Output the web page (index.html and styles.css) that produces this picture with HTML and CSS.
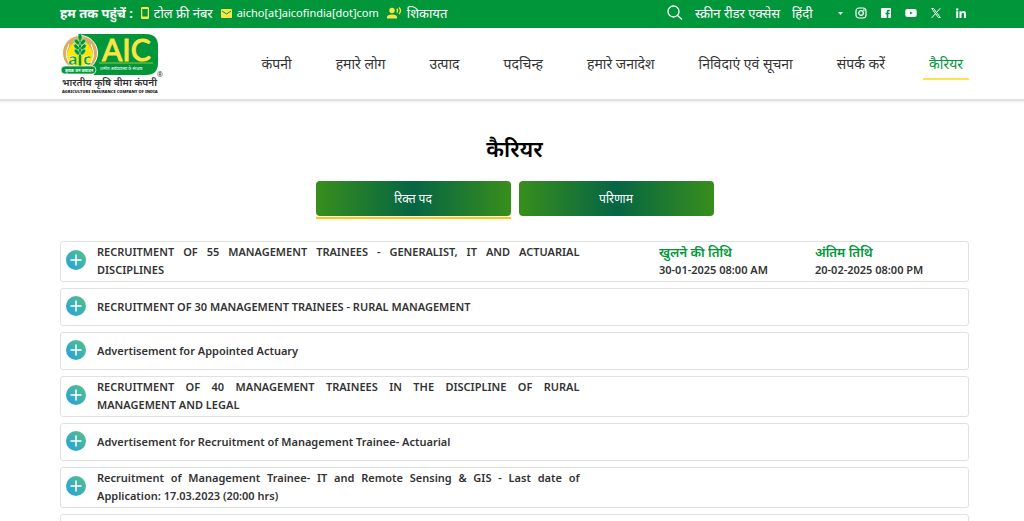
FILE: index.html
```html
<!DOCTYPE html>
<html lang="hi">
<head>
    <meta charset="UTF-8">
    <meta name="viewport" content="width=device-width, initial-scale=1.0">
    <title>कैरियर - AIC</title>
    <link rel="stylesheet" href="styles.css">
</head>
<body>
    <div class="topbar">
        <div class="contact">
            <strong>हम तक पहुंचें :</strong>
            <a href="#tollfree">
                <svg width="8" height="12" viewBox="0 0 8 12" aria-hidden="true"><path fill="#f9e547" fill-rule="evenodd" d="M1.500 0h5A1.300 1.300 0 0 1 8 1.300v9.400A1.300 1.300 0 0 1 6.500 12h-5A1.300 1.300 0 0 1 0 10.700V1.300A1.300 1.300 0 0 1 1.500 0zM1.300 2v7.500h5.400V2z"/></svg>
                <span>टोल फ्री नंबर</span>
            </a>
            <a href="#email">
                <svg width="11" height="9" viewBox="0 0 11 9" aria-hidden="true"><rect width="11" height="9" rx="1" fill="#f9e547"/><path d="M1 2l4.500 3L10 2" fill="none" stroke="#009639"/></svg>
                <span class="email">aicho[at]aicofindia[dot]com</span>
            </a>
            <a href="#complaint">
                <svg width="15" height="12" viewBox="0 0 15 12" aria-hidden="true"><circle cx="5" cy="3.500" r="2.700" fill="#f9e547"/><path fill="#f9e547" d="M0 11.500V10q0-2.500 5-2.500T10 10v1.500z"/><path d="M9.800 1.800q1.600 1.800 0 3.800M12 .5q3 3.200 0 6.500" fill="none" stroke="#f9e547" stroke-width="1.300"/></svg>
                <span>शिकायत</span>
            </a>
        </div>
        <div class="tools">
            <button class="search" aria-label="खोजें">
                <svg width="16" height="16" viewBox="0 0 16 16" fill="none" stroke="#fff" stroke-width="1.300"><circle cx="6.500" cy="6.500" r="5.500"/><path d="M10.500 10.500l4.500 4"/></svg>
            </button>
            <a href="#screen-reader">स्क्रीन रीडर एक्सेस</a>
            <div class="language">
                <select aria-label="भाषा">
                    <option>हिंदी</option>
                    <option>English</option>
                </select>
                <svg width="5" height="3" viewBox="0 0 5 3" aria-hidden="true"><path d="M0 0h5L2.500 3z" fill="#fff"/></svg>
            </div>
            <div class="social">
                <a href="#instagram" aria-label="Instagram"><svg width="12" height="12" viewBox="0 0 12 12" fill="none" stroke="#fff" stroke-width="1.200"><rect x="1" y="1" width="10" height="10" rx="3"/><circle cx="6" cy="6" r="2.300"/><circle cx="8.900" cy="3.100" r=".3"/></svg></a>
                <a href="#facebook" aria-label="Facebook"><svg width="12" height="12" viewBox="0 0 12 12"><path fill="#fff" d="M2 1h8a1 1 0 0 1 1 1v8a1 1 0 0 1-1 1H8.300V7.300h1.200l.2-1.500H8.300v-.9c0-.5.2-.7.800-.7h.7V2.800H8.700C7.300 2.800 6.700 3.600 6.700 4.700v1.100H5.500v1.500h1.200V11H2a1 1 0 0 1-1-1V2a1 1 0 0 1 1-1z"/></svg></a>
                <a href="#youtube" aria-label="YouTube"><svg width="12" height="12" viewBox="0 0 12 12"><path fill="#fff" fill-rule="evenodd" d="M2.500 2h7Q11.700 2 11.700 4v4q0 2-2.200 2h-7Q.3 10 .3 8V4Q.3 2 2.500 2zM5 4.400v3.200L7.700 6z"/></svg></a>
                <a href="#x" aria-label="X"><svg width="12" height="12" viewBox="0 0 12 12" fill="none" stroke="#fff"><path d="M1.700 1.500h1.900l6.700 9H8.400zM10.300 1.200L6.600 5.300M5.300 6.900L1.600 10.900"/></svg></a>
                <a href="#linkedin" aria-label="LinkedIn"><svg width="12" height="12" viewBox="0 0 12 12" fill="#fff"><circle cx="2.200" cy="2.400" r="1.200"/><path d="M1.200 4.300h2V11h-2zM4.500 4.300h1.900v.9q.7-1.100 2.200-1.100 2.400 0 2.400 2.900v4H9V7.400q0-1.600-1.200-1.600T6.500 7.400V11h-2z"/></svg></a>
            </div>
        </div>
    </div>

    <header class="header">
        <a class="logo" href="#home" aria-label="AIC">
            <svg width="104" height="62" viewBox="0 0 104 62">
                <path d="M18 1h68q12 0 12 12v17q0 12-12 12H34z" fill="#009639"/>
                <circle cx="20" cy="20" r="17.500" fill="#d9ae62" stroke="#fff"/>
                <path d="M20 6q13 6 13 18l-4 12H11L7 24Q7 12 20 6z" fill="#ffe600"/>
                <path d="M9 11q-7 14 5 25M31 11q7 14-5 25" fill="none" stroke="#fff"/>
                <path d="M20 6v27" stroke="#009639" stroke-width="2.500"/>
                <g fill="#009639" stroke="#fff" stroke-width=".4">
                    <ellipse cx="20" cy="4" rx="2" ry="3.500"/>
                    <ellipse cx="17" cy="9" rx="2" ry="3.500" transform="rotate(-40 17 9)"/>
                    <ellipse cx="23" cy="9" rx="2" ry="3.500" transform="rotate(40 23 9)"/>
                    <ellipse cx="16.500" cy="14" rx="2" ry="3.500" transform="rotate(-40 16.500 14)"/>
                    <ellipse cx="23.500" cy="14" rx="2" ry="3.500" transform="rotate(40 23.500 14)"/>
                    <ellipse cx="17" cy="19" rx="2" ry="3.500" transform="rotate(-40 17 19)"/>
                    <ellipse cx="23" cy="19" rx="2" ry="3.500" transform="rotate(40 23 19)"/>
                </g>
                <text class="logo-mono" x="8" y="32">a</text>
                <text class="logo-mono" x="23" y="32">c</text>
                <rect x="1" y="33" width="35" height="8" rx="4" fill="#009639" stroke="#fff" stroke-width=".7"/>
                <text class="logo-tiny" x="5" y="39">कृषक धन उत्पादन</text>
                <text class="logo-name" x="42" y="28">AIC</text>
                <path d="M39 30h54" stroke="#f9e547" stroke-width=".6"/>
                <text class="logo-tag" x="40" y="37">ग्रामीण अर्थव्यवस्था के संरक्षक</text>
                <text class="logo-hindi" x="2" y="53">भारतीय कृषि बीमा कंपनी</text>
                <text class="logo-english" x="2" y="60">AGRICULTURE INSURANCE COMPANY OF INDIA</text>
                <text class="logo-reg" x="97" y="44">®</text>
            </svg>
        </a>
        <nav class="menu">
            <a href="#company">कंपनी</a>
            <a href="#people">हमारे लोग</a>
            <a href="#products">उत्पाद</a>
            <a href="#footprint">पदचिन्ह</a>
            <a href="#mandate">हमारे जनादेश</a>
            <a href="#tenders">निविदाएं एवं सूचना</a>
            <a href="#contact">संपर्क करें</a>
            <a class="active" href="#career">कैरियर</a>
        </nav>
    </header>

    <main class="main">
        <h1>कैरियर</h1>
        <div class="tabs">
            <div class="tab active"><button>रिक्त पद</button></div>
            <div class="tab"><button>परिणाम</button></div>
        </div>

        <svg class="defs" width="0" height="0" aria-hidden="true">
            <defs>
                <linearGradient id="plusFill" x1="0" y1="1" x2="1" y2="0">
                    <stop offset="0.100" stop-color="#27a4d8"/>
                    <stop offset="0.900" stop-color="#55bd8c"/>
                </linearGradient>
                <symbol id="plus" viewBox="0 0 20 20">
                    <circle cx="10" cy="10" r="10" fill="url(#plusFill)"/>
                    <path d="M10 5v10M5 10h10" stroke="#fff" stroke-width="1.500" stroke-linecap="round"/>
                </symbol>
            </defs>
        </svg>

        <div class="list">
            <div class="item">
                <button class="toggle" aria-label="RECRUITMENT OF 55 MANAGEMENT TRAINEES"><svg width="20" height="20"><use href="#plus"/></svg></button>
                <p class="title">RECRUITMENT OF 55 MANAGEMENT TRAINEES - GENERALIST, IT AND ACTUARIAL DISCIPLINES</p>
                <p class="date"><b>खुलने की तिथि</b>30-01-2025 08:00 AM</p>
                <p class="date"><b>अंतिम तिथि</b>20-02-2025 08:00 PM</p>
            </div>
            <div class="item">
                <button class="toggle" aria-label="RECRUITMENT OF 30 MANAGEMENT TRAINEES"><svg width="20" height="20"><use href="#plus"/></svg></button>
                <p class="title">RECRUITMENT OF 30 MANAGEMENT TRAINEES - RURAL MANAGEMENT</p>
            </div>
            <div class="item">
                <button class="toggle" aria-label="Appointed Actuary"><svg width="20" height="20"><use href="#plus"/></svg></button>
                <p class="title">Advertisement for Appointed Actuary</p>
            </div>
            <div class="item">
                <button class="toggle" aria-label="RECRUITMENT OF 40 MANAGEMENT TRAINEES"><svg width="20" height="20"><use href="#plus"/></svg></button>
                <p class="title">RECRUITMENT OF 40 MANAGEMENT TRAINEES IN THE DISCIPLINE OF RURAL MANAGEMENT AND LEGAL</p>
            </div>
            <div class="item">
                <button class="toggle" aria-label="Management Trainee- Actuarial"><svg width="20" height="20"><use href="#plus"/></svg></button>
                <p class="title">Advertisement for Recruitment of Management Trainee- Actuarial</p>
            </div>
            <div class="item">
                <button class="toggle" aria-label="Management Trainee- IT"><svg width="20" height="20"><use href="#plus"/></svg></button>
                <p class="title">Recruitment of Management Trainee- IT and Remote Sensing &amp; GIS - Last date of Application: 17.03.2023 (20:00 hrs)</p>
            </div>
            <div class="item"></div>
        </div>
    </main>
</body>
</html>
```

FILE: styles.css
```css
* {
    box-sizing: border-box;
}
html {
    scrollbar-width: none;
}
body {
    margin: 0;
    font-family: "Noto Sans", "Noto Sans Devanagari", sans-serif;
    font-size: 12px;
    color: #333;
    background: #fff;
}
a {
    color: inherit;
    text-decoration: none;
}
button,
select {
    font: inherit;
    color: inherit;
    background: none;
    border: none;
    padding: 0;
    cursor: pointer;
}
svg {
    display: block;
    flex: none;
    overflow: visible;
}
.topbar {
    display: flex;
    justify-content: space-between;
    align-items: center;
    height: 28px;
    padding: 0 57px 2px 60px;
    background: #009639;
    color: #fff;
    font-size: 13px;
    line-height: 24px;
    white-space: nowrap;
}
.contact,
.contact a {
    display: flex;
    align-items: center;
}
.contact {
    gap: 8px;
}
.contact a {
    gap: 5px;
}
.email {
    font-size: 11px;
}
.tools {
    display: flex;
    align-items: center;
    gap: 12px;
}
.language {
    display: flex;
    align-items: center;
    width: 51px;
}
.language select {
    appearance: none;
    flex: 1;
    min-width: 0;
}
.social {
    display: flex;
    gap: 13px;
}
.header {
    display: flex;
    justify-content: space-between;
    align-items: center;
    height: 73px;
    padding: 0 55px 0 60px;
    border-bottom: 2px solid #e0e2e2;
    box-shadow: 0 1px 2px rgba(0, 0, 0, 0.08);
}
.menu {
    display: flex;
    gap: 32px;
    font-size: 14px;
    line-height: 28px;
    white-space: nowrap;
}
.menu a {
    padding: 2px 6px 0;
    border-bottom: 2px solid transparent;
}
.menu .active {
    color: #009639;
    border-color: #f9e547;
}
.logo-name {
    font: 30px Lato, sans-serif;
    fill: #f9e547;
    stroke: #f9e547;
}
.logo-mono {
    font: bold 16px "Noto Sans", sans-serif;
    fill: #009639;
    stroke: #fff;
    stroke-width: 0.4;
}
.logo-tiny {
    font-size: 4px;
    font-weight: bold;
    fill: #fff;
}
.logo-tag {
    font-size: 4px;
    fill: #fff;
}
.logo-hindi {
    font-size: 10px;
    font-weight: 600;
    fill: #333;
}
.logo-english {
    font-size: 4px;
    font-weight: 900;
    fill: #222;
}
.logo-reg {
    font-size: 7px;
    fill: #333;
}
.main {
    padding: 27px 55px 0 60px;
}
h1 {
    margin: 0;
    color: #000;
    font-size: 22px;
    font-weight: 600;
    line-height: 40px;
    text-align: center;
}
.tabs {
    display: flex;
    justify-content: center;
    gap: 8px;
    margin-top: 13px;
}
.tab {
    flex: 0 1 195px;
    padding-bottom: 1px;
    border-bottom: 2px solid transparent;
}
.tab.active {
    border-color: #ffc800;
}
.tab button {
    width: 100%;
    height: 35px;
    border-radius: 4px;
    color: #fff;
    background: linear-gradient(90deg, #388e1c, #056544, #388e1c);
}
.defs {
    position: absolute;
}
.list {
    display: flex;
    flex-direction: column;
    gap: 6px;
    margin-top: 22px;
}
.item {
    display: grid;
    grid-template-columns: 36px 53.2% 1fr 156px 153px;
    align-items: center;
    min-height: 38px;
    padding: 1px 0 2px;
    border: 1px solid #e0e2e2;
    border-radius: 3px;
    font-size: 11px;
    font-weight: 600;
    line-height: 18px;
}
.item p {
    margin: 0;
}
.toggle {
    padding: 0 0 2px 5px;
}
.title {
    text-align: justify;
}
.date {
    grid-column: 4;
}
.date + .date {
    grid-column: 5;
}
.date b {
    display: block;
    color: #009639;
    font-size: 13px;
    font-weight: 600;
}
```
